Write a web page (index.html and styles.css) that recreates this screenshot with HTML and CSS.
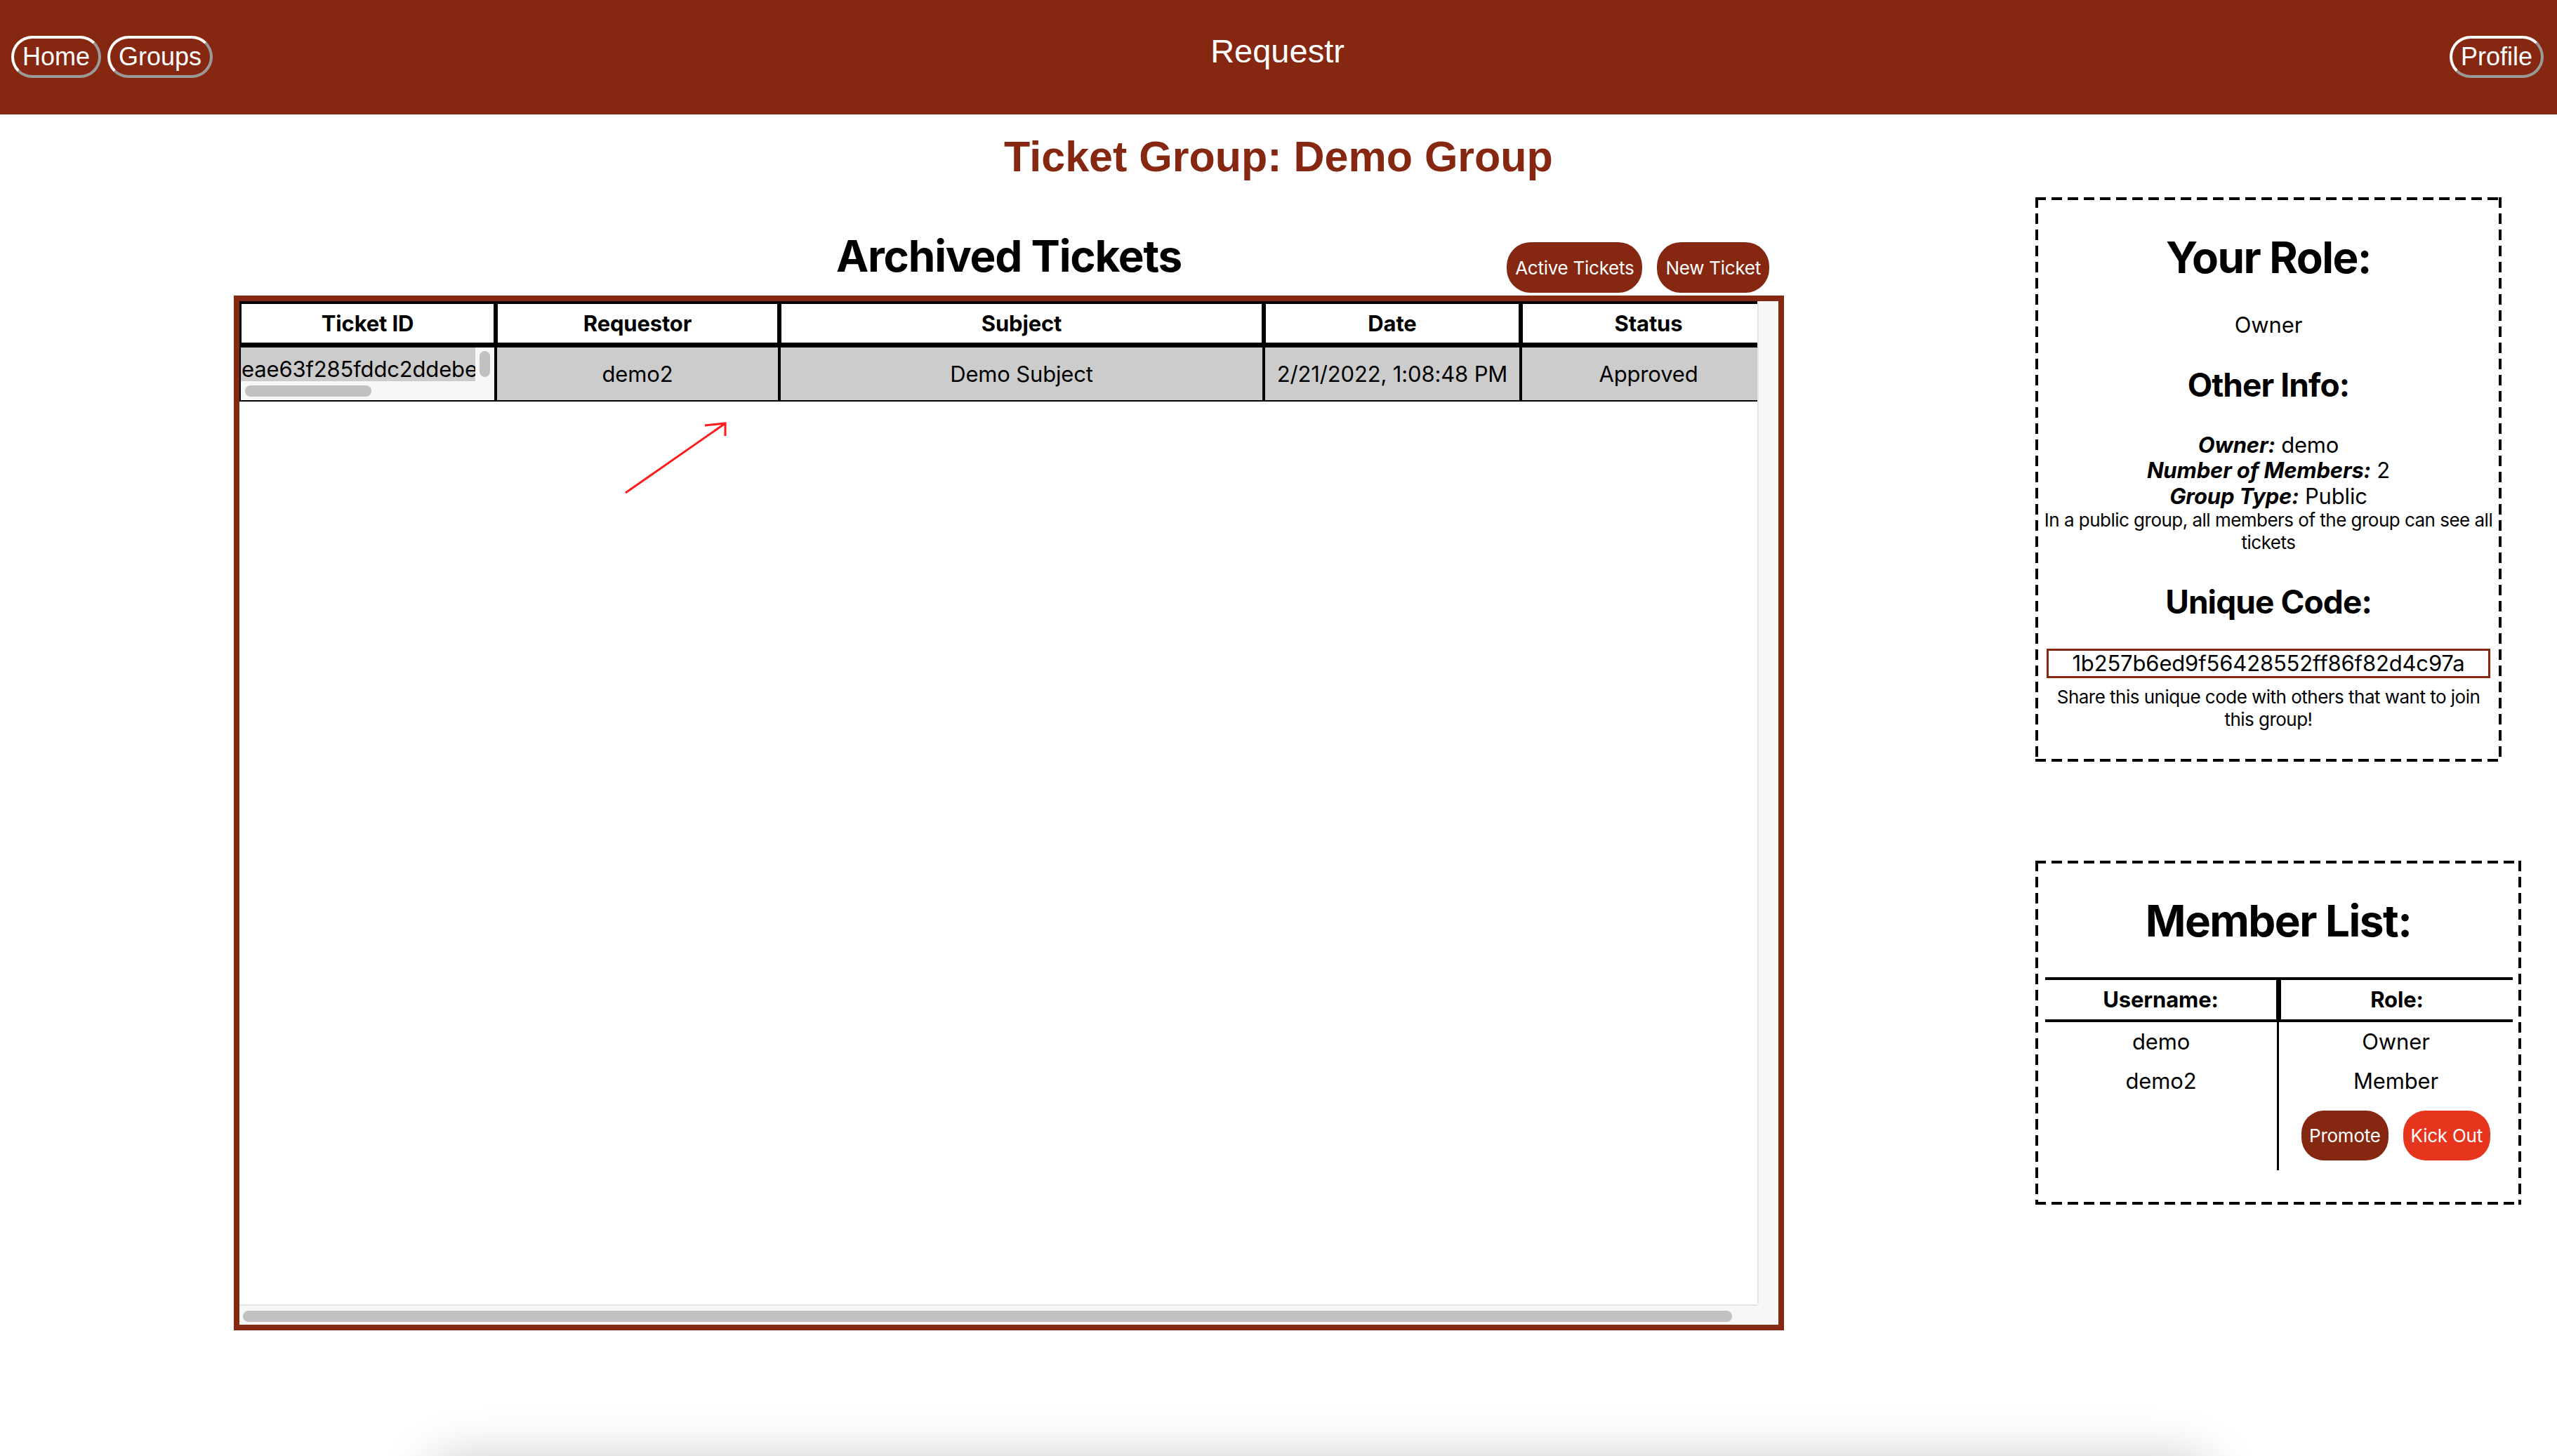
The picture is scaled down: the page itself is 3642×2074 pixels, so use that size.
FILE: index.html
```html
<!DOCTYPE html>
<html lang="en">
<head>
<meta charset="utf-8">
<title>Requestr</title>
<link rel="stylesheet" href="styles.css">
</head>
<body>
<header class="topbar">
  <nav class="nav-left">
    <button class="nav-btn">Home</button>
    <button class="nav-btn">Groups</button>
  </nav>
  <div class="brand">Requestr</div>
  <nav class="nav-right">
    <button class="nav-btn">Profile</button>
  </nav>
</header>

<main class="page">
  <h1 class="page-title">Ticket Group: Demo Group</h1>

  <div class="content">
    <section class="tickets">
      <div class="tickets-head">
        <span class="spacer"></span>
        <h2 class="tickets-title">Archived Tickets</h2>
        <div class="tickets-actions">
          <button class="pill">Active Tickets</button>
          <button class="pill">New Ticket</button>
        </div>
      </div>

      <div class="table-frame">
        <div class="table-view">
          <table class="ticket-table">
            <colgroup>
              <col class="c-id"><col class="c-req"><col class="c-sub"><col class="c-date"><col class="c-status">
            </colgroup>
            <thead>
              <tr><th>Ticket ID</th><th>Requestor</th><th>Subject</th><th>Date</th><th>Status</th></tr>
            </thead>
            <tbody>
              <tr>
                <td class="id-cell">
                  <div class="idbox">
                    <div class="idtext">eae63f285fddc2ddebe6c7a1</div>
                    <div class="id-vbar"><div class="id-vthumb"></div></div>
                    <div class="id-hbar"><div class="id-hthumb"></div></div>
                  </div>
                </td>
                <td>demo2</td>
                <td>Demo Subject</td>
                <td>2/21/2022, 1:08:48 PM</td>
                <td>Approved</td>
              </tr>
            </tbody>
          </table>
        </div>
        <div class="vtrack"></div>
        <div class="htrack"><div class="hthumb"></div></div>
        <div class="corner"></div>
      </div>

      <svg class="annot-arrow" width="180" height="130" viewBox="0 0 180 130" aria-hidden="true">
        <path d="M18 113 L160 14" />
        <path d="M131 17 L160 14 L160 32" />
      </svg>
    </section>

    <aside class="side">
      <div class="card card-info">
        <h2 class="card-h1">Your Role:</h2>
        <p class="role">Owner</p>
        <h3 class="card-h2">Other Info:</h3>
        <div class="info-lines">
          <div><span class="k">Owner:</span> demo</div>
          <div><span class="k">Number of Members:</span> 2</div>
          <div><span class="k">Group Type:</span> Public</div>
        </div>
        <p class="note">In a public group, all members of the group can see all tickets</p>
        <h3 class="card-h2 code-title">Unique Code:</h3>
        <div class="code-box">1b257b6ed9f56428552ff86f82d4c97a</div>
        <p class="note share">Share this unique code with others that want to join this group!</p>
      </div>

      <div class="card card-members">
        <h2 class="card-h1">Member List:</h2>
        <table class="members">
          <colgroup><col class="m-col"><col class="m-col"></colgroup>
          <thead>
            <tr><th>Username:</th><th>Role:</th></tr>
          </thead>
          <tbody>
            <tr><td>demo</td><td>Owner</td></tr>
            <tr><td>demo2</td><td>Member</td></tr>
            <tr class="actions-row">
              <td></td>
              <td><div class="member-actions"><button class="mbtn promote">Promote</button><button class="mbtn kick">Kick Out</button></div></td>
            </tr>
          </tbody>
        </table>
      </div>
    </aside>
  </div>
</main>

<div class="dock-shadow"></div>
</body>
</html>
```

FILE: styles.css
```css
html, body {
  margin: 0;
  padding: 0;
  background: #ffffff;
}

body {
  font-family: Inter, "Noto Sans", "DejaVu Sans", sans-serif;
  color: #000;
  letter-spacing: -0.01em;
  overflow: hidden;
}

/* ---------- top bar ---------- */
.topbar {
  height: 163px;
  background: #862811;
  display: grid;
  grid-template-columns: 1fr auto 1fr;
  align-items: start;
  padding: 0 19px 0 16px;
  box-sizing: border-box;
}

.nav-left {
  display: flex;
  gap: 9px;
  padding-top: 51px;
}

.nav-right {
  display: flex;
  justify-content: flex-end;
  padding-top: 51px;
}

.nav-btn {
  font-family: "Liberation Sans", Arial, sans-serif;
  font-size: 36px;
  letter-spacing: 0;
  color: #fff;
  background: transparent;
  height: 60px;
  padding: 0 12px;
  border: 4px solid #fff;
  border-right-color: #9a9a9a;
  border-bottom-color: #9a9a9a;
  border-radius: 30px;
  line-height: 1;
  margin: 0;
}

.brand {
  font-family: "Liberation Sans", Arial, sans-serif;
  font-size: 47px;
  line-height: 53px;
  letter-spacing: 0;
  color: #fff;
  padding-top: 46px;
}

/* ---------- page ---------- */
.page-title {
  margin: 25px 0 0;
  text-align: center;
  font-family: "Liberation Sans", Arial, sans-serif;
  font-weight: 700;
  font-size: 61px;
  line-height: 70px;
  letter-spacing: 0;
  color: #862811;
}

.content {
  display: grid;
  grid-template-columns: 2208px 692px;
  column-gap: 358px;
  padding-left: 333px;
  align-items: start;
}

/* ---------- tickets column ---------- */
.tickets {
  position: relative;
  margin-top: 71px;
}

.tickets-head {
  display: grid;
  grid-template-columns: 1fr auto 1fr;
  align-items: end;
}

.tickets-title {
  margin: 0 0 20px;
  font-size: 62px;
  line-height: 72px;
  font-weight: 700;
  letter-spacing: -0.02em;
}

.tickets-actions {
  justify-self: end;
  display: flex;
  gap: 21px;
  margin: 0 21px 4px 0;
}

.pill {
  font-family: Inter, "Noto Sans", sans-serif;
  font-size: 26px;
  letter-spacing: -0.01em;
  color: #fff;
  background: #862811;
  border: none;
  border-radius: 34px;
  height: 72px;
  padding: 0 12px;
  margin: 0;
}

.table-frame {
  border: 8px solid #862811;
  display: grid;
  grid-template-columns: 2162px 30px;
  grid-template-rows: 1429px 29px;
}

.table-view {
  overflow: hidden;
  background: #fff;
}

.vtrack {
  background: #f7f7f7;
  border-left: 2px solid #e6e6e6;
}

.htrack {
  background: #f7f7f7;
  border-top: 2px solid #e3e3e3;
  padding: 7px 0 0 5px;
  box-sizing: border-box;
}

.hthumb {
  width: 2121px;
  height: 16px;
  border-radius: 8px;
  background: #c1c1c1;
}

.corner {
  background: #f7f7f7;
}

.ticket-table {
  border-collapse: separate;
  border-spacing: 0;
  table-layout: fixed;
  width: 2189px;
  font-size: 31px;
}

.c-id { width: 365px; }
.c-req { width: 404px; }
.c-sub { width: 690px; }
.c-date { width: 366px; }
.c-status { width: 364px; }

.ticket-table th {
  border: 3px solid #000;
  border-top-width: 4px;
  padding: 0;
  line-height: 55px;
  font-weight: 700;
  text-align: center;
  background: #fff;
}

.ticket-table td {
  border: 2px solid #000;
  border-top-width: 4px;
  background: #cccccc;
  padding: 0;
  height: 75px;
  text-align: center;
  white-space: nowrap;
  overflow: hidden;
}

.ticket-table td.id-cell {
  vertical-align: top;
}

.idbox {
  display: grid;
  grid-template-columns: 1fr 27px;
  grid-template-rows: 48px 27px;
  background: #f7f7f7;
  height: 75px;
}

.idtext {
  background: #cccccc;
  overflow: hidden;
  text-align: left;
  line-height: 61px;
  height: 48px;
  white-space: nowrap;
  padding-left: 1px;
}

.id-vbar {
  padding: 5px 0 0 6px;
}

.id-vthumb {
  width: 15px;
  height: 37px;
  border-radius: 8px;
  background: #c1c1c1;
}

.id-hbar {
  grid-column: 1 / 3;
  padding: 6px 0 0 6px;
}

.id-hthumb {
  width: 180px;
  height: 16px;
  border-radius: 8px;
  background: #c1c1c1;
}

.annot-arrow {
  position: absolute;
  left: 540px;
  top: 260px;
  fill: none;
  stroke: #ff1a1a;
  stroke-width: 3;
}

/* ---------- side column ---------- */
.side {
  display: flex;
  flex-direction: column;
  align-items: flex-start;
  margin-top: 23px;
}

.card {
  border: 4px solid transparent;
  text-align: center;
  box-sizing: border-box;
  background:
    repeating-linear-gradient(90deg, #000 0 15px, transparent 15px 23px) left top / 100% 4px no-repeat,
    repeating-linear-gradient(90deg, #000 0 15px, transparent 15px 23px) left bottom / 100% 4px no-repeat,
    repeating-linear-gradient(180deg, #000 0 15px, transparent 15px 23px) left top / 4px 100% no-repeat,
    repeating-linear-gradient(180deg, #000 0 15px, transparent 15px 23px) right top / 4px 100% no-repeat,
    #fff;
  background-origin: border-box;
  background-clip: border-box;
}

.card-info {
  width: 664px;
  padding-bottom: 40px;
}

.card-members {
  width: 692px;
  margin-top: 141px;
  padding-bottom: 45px;
}

.card-h1 {
  margin: 46px 0 0;
  font-size: 62px;
  line-height: 72px;
  font-weight: 700;
  letter-spacing: -0.025em;
}

.card-h2 {
  margin: 40.5px 0 0;
  font-size: 46px;
  line-height: 54px;
  font-weight: 700;
  letter-spacing: -0.02em;
}

.role {
  margin: 40.5px 0 0;
  font-size: 31px;
  line-height: 37px;
}

.info-lines {
  margin-top: 40.5px;
  font-size: 31px;
  line-height: 36.5px;
}

.k {
  font-weight: 700;
  font-style: italic;
}

.note {
  margin: 0;
  font-size: 26px;
  line-height: 32px;
  letter-spacing: -0.02em;
}

.code-title {
  margin-top: 41px;
}

.code-box {
  margin: 40px 12px 0;
  border: 3px solid #862811;
  height: 42px;
  box-sizing: border-box;
  font-size: 31px;
  line-height: 36px;
  letter-spacing: -0.005em;
}

.share {
  margin-top: 11px;
  padding: 0 10px;
}

.members {
  margin: 43.5px 0 0 10px;
  width: 666px;
  border-collapse: separate;
  border-spacing: 0;
  table-layout: fixed;
  font-size: 31px;
}

.m-col { width: 333px; }

.members th {
  border-top: 4px solid #000;
  border-bottom: 4px solid #000;
  padding: 0;
  line-height: 56px;
  font-weight: 700;
  text-align: center;
}

.members th:first-child {
  border-right: 4px solid #000;
}

.members th:last-child {
  border-left: 3px solid #000;
}

.members td {
  padding: 9.5px 0;
  line-height: 37px;
  text-align: center;
}

.members td:first-child {
  border-right: 3px solid #000;
}

.members .actions-row td {
  padding: 14px 0;
}

.member-actions {
  display: flex;
  justify-content: center;
  gap: 21px;
}

.mbtn {
  font-family: Inter, "Noto Sans", sans-serif;
  font-size: 26px;
  letter-spacing: -0.01em;
  color: #fff;
  border: none;
  border-radius: 32px;
  height: 71px;
  padding: 0 11px;
  margin: 0;
}

.promote { background: #862811; }
.kick { background: #e6341d; }

/* floating dock shadow at the bottom edge */
.dock-shadow {
  position: fixed;
  left: 600px;
  bottom: -120px;
  width: 2560px;
  height: 120px;
  border-radius: 60px;
  background: #fff;
  box-shadow: 0 0 70px rgba(0, 0, 0, 0.2);
}
```
